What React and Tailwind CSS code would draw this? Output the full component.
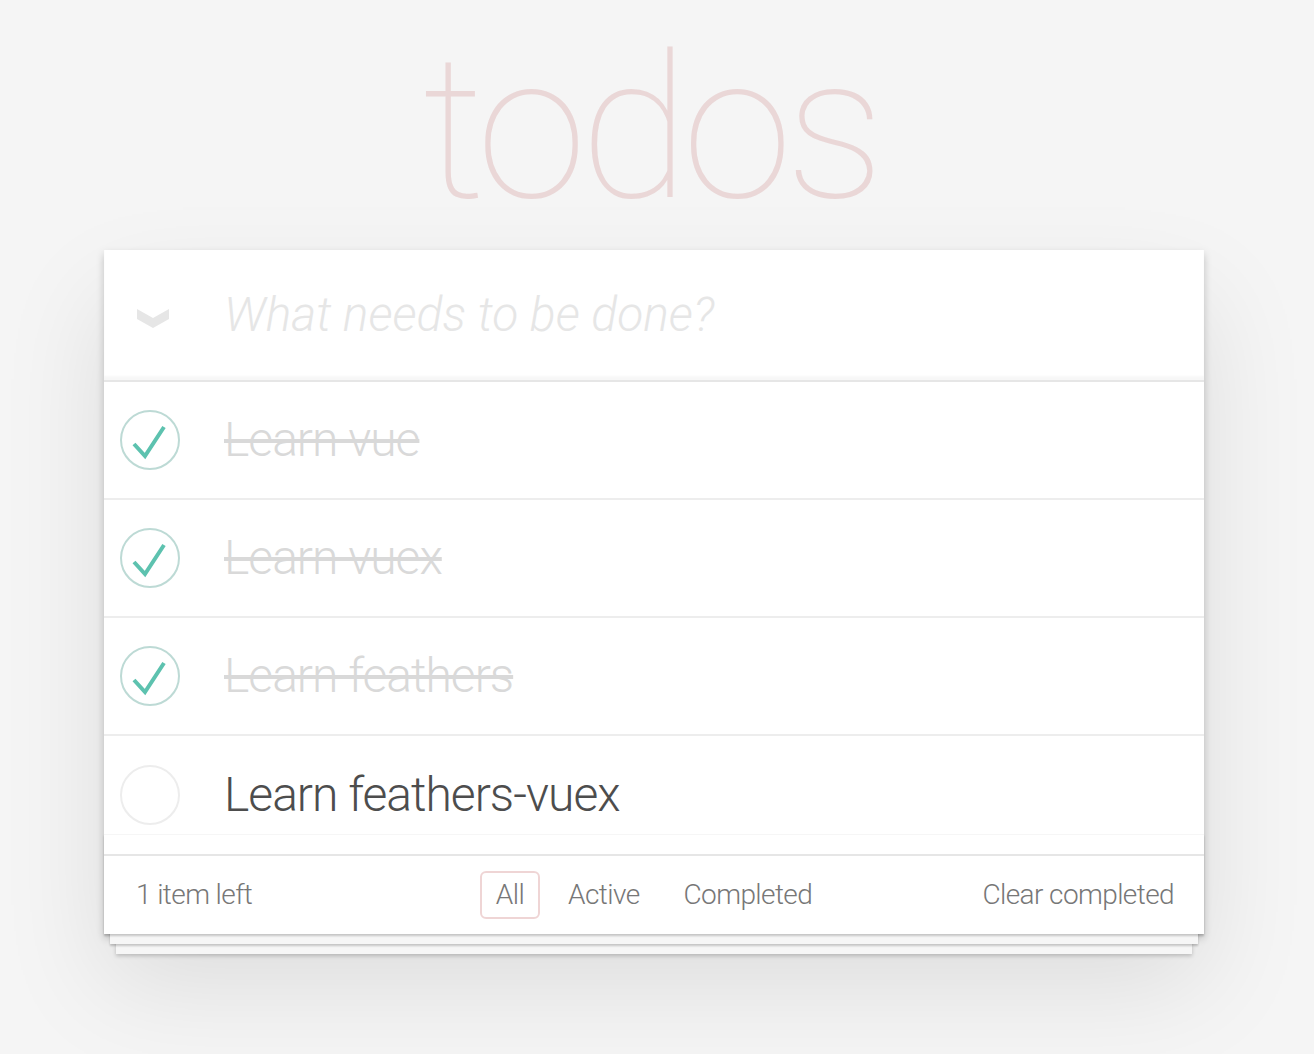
import { useState } from "react";

const initialTodos = [
  { id: 1, title: "Learn vue", done: true },
  { id: 2, title: "Learn vuex", done: true },
  { id: 3, title: "Learn feathers", done: true },
  { id: 4, title: "Learn feathers-vuex", done: false },
];

function Toggle({ done }) {
  return (
    <svg width="60" height="60" viewBox="0 0 60 60" className="shrink-0">
      <circle
        cx="30"
        cy="30"
        r="29"
        fill="none"
        stroke={done ? "#bddad5" : "#ededed"}
        strokeWidth="2"
      />
      {done && (
        <polyline
          points="14,34 25,46 44,17"
          fill="none"
          stroke="#5dc2af"
          strokeWidth="4"
        />
      )}
    </svg>
  );
}

export default function App() {
  const [todos] = useState(initialTodos);
  const left = todos.filter((t) => !t.done).length;

  return (
    <div
      className="min-h-[1054px] bg-[#f5f5f5] font-light text-[#4d4d4d]"
      style={{ fontFamily: "Roboto, 'Open Sans', sans-serif" }}
    >
      <div className="w-[1100px] ml-[104px] pt-[29px]">
        <h1 className="text-center text-[200px] leading-[200px] font-thin tracking-[-7px] text-[rgba(175,47,47,0.15)] -ml-[8px] h-[221px]">
          todos
        </h1>

        <section className="relative bg-white shadow-[0_4px_8px_0_rgba(0,0,0,0.2),0_50px_100px_0_rgba(0,0,0,0.1)]">
          <header className="h-[130px] flex items-center shadow-[inset_0_-4px_2px_rgba(0,0,0,0.03)]">
            <div className="w-[120px] flex pl-[33px] pt-[6px]">
              <svg width="32" height="19" viewBox="0 0 32 19">
                <polygon points="0,0 16,9 32,0 32,10 16,19 0,10" fill="#e6e6e6" />
              </svg>
            </div>
            <span className="text-[48px] italic text-[#e6e6e6] leading-none">
              What needs to be done?
            </span>
          </header>

          <ul className="border-t-2 border-[#e6e6e6]">
            {todos.map((todo, i) => (
              <li
                key={todo.id}
                className={
                  "h-[118px] flex items-center " +
                  (i < todos.length - 1 ? "border-b-2 border-[#ededed]" : "")
                }
              >
                <div className="w-[120px] flex pl-[16px]">
                  <Toggle done={todo.done} />
                </div>
                <span
                  className={
                    "text-[48px] leading-[58px] tracking-[-1px] " +
                    (todo.done
                      ? "text-[#d9d9d9] line-through decoration-[4px]"
                      : "text-[#4d4d4d]")
                  }
                >
                  {todo.title}
                </span>
              </li>
            ))}
          </ul>

          <div className="absolute left-0 right-0 bottom-0 h-[100px] border-t border-[#f6f6f6] pointer-events-none shadow-[0_2px_2px_rgba(0,0,0,0.2),0_16px_0_-6px_#f6f6f6,0_18px_2px_-6px_rgba(0,0,0,0.2),0_32px_0_-12px_#f6f6f6,0_34px_4px_-12px_rgba(0,0,0,0.2)]" />

          <footer className="relative h-[80px] border-t-2 border-[#e6e6e6] grid grid-cols-[1fr_auto_1fr] items-center px-[30px] text-[28px] tracking-[-0.6px] text-[#777] bg-white">
            <span className="pl-[2px]">
              {left} item{left === 1 ? "" : "s"} left
            </span>
            <ul className="flex">
              {["All", "Active", "Completed"].map((f) => (
                <li key={f}>
                  <a
                    className={
                      "block m-[6px] px-[14px] py-[6px] leading-[32px] border-2 rounded-[6px] " +
                      (f === "All"
                        ? "border-[rgba(175,47,47,0.2)]"
                        : "border-transparent")
                    }
                  >
                    {f}
                  </a>
                </li>
              ))}
            </ul>
            <span className="text-right">Clear completed</span>
          </footer>
        </section>
      </div>
    </div>
  );
}
